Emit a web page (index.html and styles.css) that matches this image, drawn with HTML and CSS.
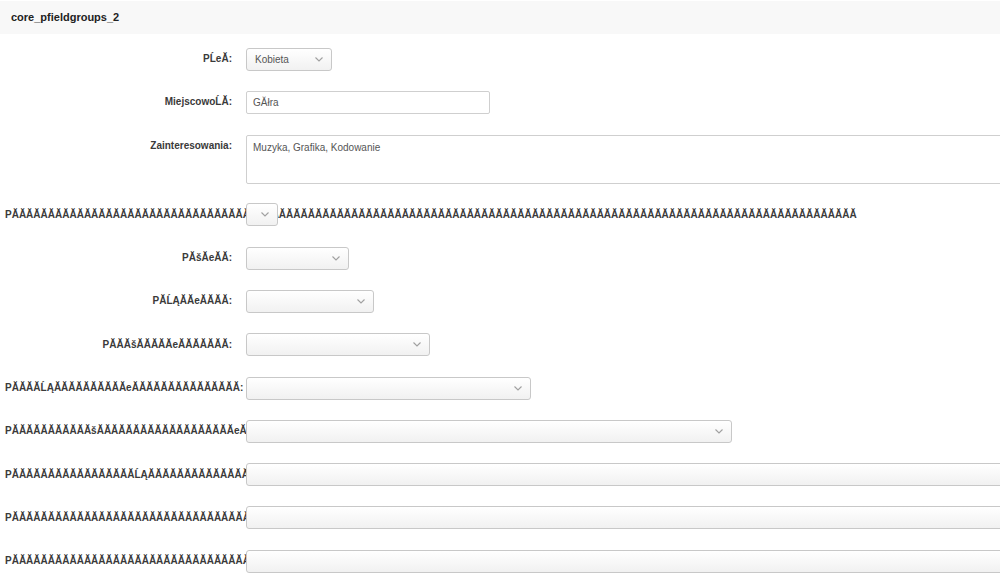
FILE: index.html
```html
<!DOCTYPE html>
<html lang="pl">
<head>
<meta charset="utf-8">
<title>core_pfieldgroups_2</title>
<link rel="stylesheet" href="styles.css">
</head>
<body>
<div class="page">
  <div class="header">core_pfieldgroups_2</div>
  <div class="form">
    <div class="row">
      <label class="lbl">PĹeĂ:</label>
      <div class="select w86"><span class="val">Kobieta</span><svg class="chev" viewBox="0 0 8 5"><path d="M0.5 0.5 L4 4 L7.5 0.5"/></svg></div>
    </div>
    <div class="row">
      <label class="lbl">MiejscowoĹĂ:</label>
      <div class="input w244">GĂłra</div>
    </div>
    <div class="row top">
      <label class="lbl">Zainteresowania:</label>
      <div class="textarea">Muzyka, Grafika, Kodowanie</div>
    </div>
    <div class="row">
      <label class="lbl">PĂĂĂĂĂĂĂĂĂĂĂĂĂĂĂĂĂĂĂĂĂĂĂĂĂĂĂĂĂĂĂĂĂĂĂĂĂĂĂĂĂĂĂĂĂĂĂĂĂĂĂĂĂĂĂĂĂĂĂĂĂĂĂĂĂĂĂĂĂĂĂĂĂĂĂĂĂĂĂĂĂĂĂĂĂĂĂĂĂĂĂĂĂĂĂĂĂĂĂĂĂĂĂĂĂĂĂĂĂĂĂĂĂĂĂĂĂ</label>
      <div class="select w32"><span class="val"></span><svg class="chev" viewBox="0 0 8 5"><path d="M0.5 0.5 L4 4 L7.5 0.5"/></svg></div>
    </div>
    <div class="row">
      <label class="lbl">PĂšĂeĂĂ:</label>
      <div class="select w103"><span class="val"></span><svg class="chev" viewBox="0 0 8 5"><path d="M0.5 0.5 L4 4 L7.5 0.5"/></svg></div>
    </div>
    <div class="row">
      <label class="lbl">PĂĹĄĂĂeĂĂĂĂ:</label>
      <div class="select w128"><span class="val"></span><svg class="chev" viewBox="0 0 8 5"><path d="M0.5 0.5 L4 4 L7.5 0.5"/></svg></div>
    </div>
    <div class="row">
      <label class="lbl">PĂĂĂšĂĂĂĂĂeĂĂĂĂĂĂĂ:</label>
      <div class="select w184"><span class="val"></span><svg class="chev" viewBox="0 0 8 5"><path d="M0.5 0.5 L4 4 L7.5 0.5"/></svg></div>
    </div>
    <div class="row">
      <label class="lbl">PĂĂĂĂĹĄĂĂĂĂĂĂĂĂĂĂeĂĂĂĂĂĂĂĂĂĂĂĂĂĂĂ:</label>
      <div class="select w285"><span class="val"></span><svg class="chev" viewBox="0 0 8 5"><path d="M0.5 0.5 L4 4 L7.5 0.5"/></svg></div>
    </div>
    <div class="row">
      <label class="lbl">PĂĂĂĂĂĂĂĂĂĂĂšĂĂĂĂĂĂĂĂĂĂĂĂĂĂĂĂĂĂĂeĂĂĂĂĂĂĂĂĂĂĂĂĂĂĂ</label>
      <div class="select w486"><span class="val"></span><svg class="chev" viewBox="0 0 8 5"><path d="M0.5 0.5 L4 4 L7.5 0.5"/></svg></div>
    </div>
    <div class="row">
      <label class="lbl">PĂĂĂĂĂĂĂĂĂĂĂĂĂĂĂĂĂĹĄĂĂĂĂĂĂĂĂĂĂĂĂĂĂĂĂĂĂĂĂĂĂ</label>
      <div class="select wide"></div>
    </div>
    <div class="row">
      <label class="lbl">PĂĂĂĂĂĂĂĂĂĂĂĂĂĂĂĂĂĂĂĂĂĂĂĂĂĂĂĂĂĂĂĂĂĂĂĂĂĂĂĂĂĂ</label>
      <div class="select wide"></div>
    </div>
    <div class="row">
      <label class="lbl">PĂĂĂĂĂĂĂĂĂĂĂĂĂĂĂĂĂĂĂĂĂĂĂĂĂĂĂĂĂĂĂĂĂĂĂĂĂĂĂĂĂĂ</label>
      <div class="select wide"></div>
    </div>
  </div>
</div>
</body>
</html>
```

FILE: styles.css
```css
html, body {
  margin: 0;
  padding: 0;
  background: #fff;
}
body {
  font-family: "Liberation Sans", Arial, sans-serif;
  color: #333;
  overflow: hidden;
  width: 1000px;
  height: 574px;
}
.page {
  padding-top: 1px;
}
.header {
  height: 33px;
  line-height: 33px;
  background: #f8f8f8;
  padding-left: 11px;
  font-size: 11px;
  font-weight: bold;
  color: #222;
}
.form {
  display: flex;
  flex-direction: column;
  gap: 21.3px;
  padding-top: 14px;
}
.row {
  display: flex;
  align-items: center;
  height: 22px;
}
.row.top {
  align-items: flex-start;
  height: 48px;
}
.lbl {
  flex: 0 0 227px;
  width: 227px;
  margin-left: 5px;
  margin-right: 14px;
  text-align: right;
  white-space: nowrap;
  font-size: 10px;
  font-weight: bold;
  line-height: 22px;
  color: #3a3a3a;
}
.select {
  flex: 0 0 auto;
  box-sizing: border-box;
  height: 23px;
  border: 1px solid #c8c8c8;
  border-radius: 3px;
  background: linear-gradient(#ffffff, #f1f1f1);
  display: flex;
  align-items: center;
  justify-content: space-between;
  padding: 0 8px 0 8px;
  font-size: 10px;
  color: #555;
}
.chev {
  width: 8px;
  height: 5px;
  fill: none;
  stroke: #a0a0a0;
  stroke-width: 1.1;
}
.input {
  flex: 0 0 auto;
  box-sizing: border-box;
  height: 23px;
  border: 1px solid #cfcfcf;
  border-radius: 2px;
  background: #fff;
  padding: 0 6px;
  line-height: 21px;
  font-size: 10px;
  color: #555;
}
.textarea {
  flex: 0 0 auto;
  box-sizing: border-box;
  width: 800px;
  height: 49px;
  border: 1px solid #cfcfcf;
  border-radius: 2px;
  background: #fff;
  padding: 6px 6px;
  font-size: 10px;
  color: #555;
}
.w86 { width: 86px; }
.w244 { width: 244px; }
.w32 { width: 32px; }
.w103 { width: 103px; }
.w128 { width: 128px; }
.w184 { width: 184px; }
.w285 { width: 285px; }
.w486 { width: 486px; }
.wide { width: 800px; }
```
